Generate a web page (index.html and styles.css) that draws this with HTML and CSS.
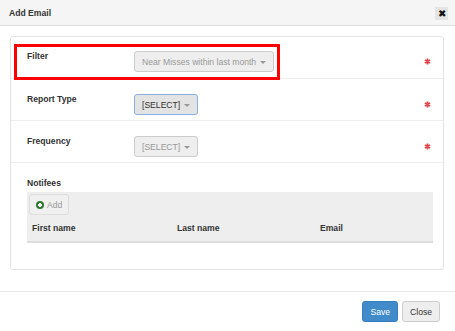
FILE: index.html
```html
<!DOCTYPE html>
<html lang="en">
<head>
    <meta charset="UTF-8">
    <title>Add Email</title>
    <link rel="stylesheet" href="styles.css">
</head>
<body>
    <div class="modal">
        <div class="modal-header">
            <span class="modal-title">Add Email</span>
            <button class="btn-close">&#10006;</button>
        </div>

        <div class="modal-body">
            <div class="panel">
                <div class="form-row">
                    <div class="highlight"></div>
                    <label class="form-label">Filter</label>
                    <div class="form-field">
                        <button class="select disabled">Near Misses within last month <span class="caret"></span></button>
                    </div>
                    <svg class="required" viewBox="0 0 8 8"><path d="M4 0.5V7.5M1 2.2L7 5.8M7 2.2L1 5.8" stroke="#e0474c" stroke-width="2"/></svg>
                </div>
                <div class="form-row">
                    <label class="form-label">Report Type</label>
                    <div class="form-field">
                        <button class="select focused">[SELECT] <span class="caret"></span></button>
                    </div>
                    <svg class="required" viewBox="0 0 8 8"><path d="M4 0.5V7.5M1 2.2L7 5.8M7 2.2L1 5.8" stroke="#e0474c" stroke-width="2"/></svg>
                </div>
                <div class="form-row">
                    <label class="form-label">Frequency</label>
                    <div class="form-field">
                        <button class="select disabled">[SELECT] <span class="caret"></span></button>
                    </div>
                    <svg class="required" viewBox="0 0 8 8"><path d="M4 0.5V7.5M1 2.2L7 5.8M7 2.2L1 5.8" stroke="#e0474c" stroke-width="2"/></svg>
                </div>

                <div class="notifees">
                    <label class="form-label">Notifees</label>
                    <div class="grid-box">
                        <div class="grid-toolbar">
                            <button class="btn-add"><span class="plus-icon"></span>Add</button>
                        </div>
                        <div class="grid-head">
                            <span>First name</span>
                            <span>Last name</span>
                            <span>Email</span>
                        </div>
                    </div>
                </div>
            </div>
        </div>

        <div class="modal-footer">
            <button class="btn btn-primary">Save</button>
            <button class="btn btn-default">Close</button>
        </div>
    </div>
</body>
</html>
```

FILE: styles.css
```css
/* Dialogo "Add Email" */
body {
    margin: 0;
    background-color: #fff;
    font-family: "Liberation Sans", Arial, sans-serif;
    font-size: 8.6px;
    color: #333;
}
.modal {
    width: 455px;
    height: 331px;
    display: flex;
    flex-direction: column;
    box-sizing: border-box;
}
.modal-header {
    height: 26px;
    display: flex;
    justify-content: space-between;
    align-items: center;
    padding: 1px 7px 0 9px;
    background-color: #f5f5f5;
    border-bottom: 1px solid #dcdcdc;
    box-sizing: border-box;
}
.modal-title {
    font-weight: bold;
    font-size: 8.6px;
}
.btn-close {
    width: 13px;
    height: 13px;
    padding: 0;
    border: none;
    background-color: #e4e4e4;
    color: #111;
    font-size: 9.5px;
    line-height: 13px;
    cursor: pointer;
}
.modal-body {
    padding: 10px 11px 0 10px;
    height: 266px;
    box-sizing: border-box;
    border-bottom: 1px solid #e5e5e5;
}
.panel {
    border: 1px solid #e3e3e3;
    border-radius: 3px;
    height: 234px;
    box-sizing: border-box;
}
.form-row {
    position: relative;
    display: flex;
    align-items: flex-start;
    height: 42px;
    padding: 14px 12px 0 16px;
    border-bottom: 1px solid #eee;
    box-sizing: border-box;
}
.form-row + .form-row {
    padding-top: 15px;
}
.form-label {
    width: 107px;
    font-weight: bold;
    line-height: 11px;
}
.form-field {
    flex: 1;
}
.select {
    height: 21px;
    padding: 0 7px;
    border: 1px solid #ccc;
    border-radius: 3px;
    background-color: #eee;
    font-family: inherit;
    font-size: 8.6px;
    color: #999;
}
.select.focused {
    background-color: #e3e3e3;
    border-color: #8aaee0;
    color: #333;
}
.caret {
    display: inline-block;
    width: 0;
    height: 0;
    margin-left: 1px;
    vertical-align: middle;
    border-top: 3px solid #999;
    border-left: 3px solid transparent;
    border-right: 3px solid transparent;
}
.required {
    width: 7px;
    height: 7px;
    margin-top: 7px;
}
.highlight {
    position: absolute;
    left: 3px;
    top: 7px;
    width: 266px;
    height: 36px;
    border: 3px solid #f00;
    box-sizing: border-box;
    z-index: 2;
}
.notifees {
    padding: 15px 10px 0 16px;
}
.grid-box {
    margin-top: 3px;
    background-color: #eee;
    border-bottom: 2px solid #ddd;
}
.grid-toolbar {
    padding: 2px 2px 0;
    height: 24px;
    box-sizing: border-box;
}
.btn-add {
    height: 21px;
    padding: 0 6px;
    border: 1px solid #ddd;
    border-radius: 3px;
    background-color: #f0f0f0;
    font-family: inherit;
    font-size: 8.6px;
    color: #999;
    display: flex;
    align-items: center;
    gap: 3px;
}
.plus-icon {
    position: relative;
    width: 8px;
    height: 8px;
    border-radius: 50%;
    background-color: #2e7d32;
}
.plus-icon::before,
.plus-icon::after {
    content: "";
    position: absolute;
    background-color: #fff;
}
.plus-icon::before {
    left: 2px;
    top: 3px;
    width: 4px;
    height: 2px;
}
.plus-icon::after {
    left: 3px;
    top: 2px;
    width: 2px;
    height: 4px;
}
.grid-head {
    display: grid;
    grid-template-columns: 145px 143px 1fr;
    height: 25px;
    align-items: center;
    padding-left: 5px;
    font-weight: bold;
    padding-bottom: 1px;
    box-sizing: border-box;
}
.modal-footer {
    display: flex;
    justify-content: flex-end;
    gap: 4px;
    padding: 9px 15px 0 0;
}
.btn {
    height: 21px;
    border-radius: 3px;
    font-family: inherit;
    font-size: 8.6px;
    padding: 0 7px;
    cursor: pointer;
}
.btn-primary {
    background-color: #428bca;
    border: 1px solid #357ebd;
    color: #fff;
}
.btn-default {
    background-color: #eee;
    border: 1px solid #ccc;
    color: #333;
}
```
